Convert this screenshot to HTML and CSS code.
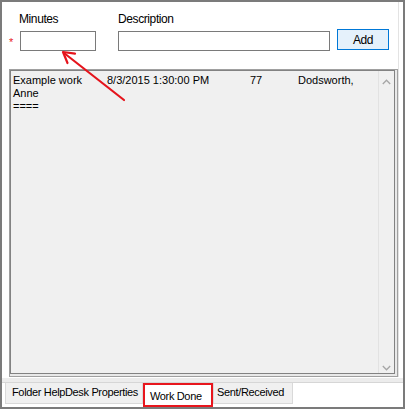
FILE: index.html
```html
<!DOCTYPE html>
<html>
<head>
<meta charset="utf-8">
<link rel="stylesheet" href="styles.css">
</head>
<body>
<div class="frame">
  <div class="page">
    <div class="form">
      <label class="lbl lbl-min">Minutes</label>
      <label class="lbl lbl-desc">Description</label>
      <span class="req">*</span>
      <div class="box box-min"></div>
      <div class="box box-desc"></div>
      <div class="btn">Add</div>
    </div>
    <div class="list">
      <div class="list-inner">
        <div class="rows">
          <div class="cell">Example work<br>Anne<br>====</div>
          <div class="cell">8/3/2015 1:30:00 PM</div>
          <div class="cell">77</div>
          <div class="cell">Dodsworth,</div>
        </div>
        <div class="scroll">
          <svg class="chev" width="9" height="6" viewBox="0 0 9 6"><polyline points="0.8,5 4.5,1.2 8.2,5" fill="none" stroke="#a6a6a6" stroke-width="1.3"/></svg>
          <svg class="chev" width="9" height="6" viewBox="0 0 9 6"><polyline points="0.8,1 4.5,4.8 8.2,1" fill="none" stroke="#a6a6a6" stroke-width="1.3"/></svg>
        </div>
      </div>
    </div>
  </div>
  <div class="band"></div>
  <div class="tabs">
    <div class="tab tab-props">Folder HelpDesk Properties</div>
    <div class="tab tab-work">Work Done</div>
    <div class="tab tab-sent">Sent/Received</div>
  </div>
  <svg class="arrow" width="405" height="409" viewBox="0 0 405 409">
    <g fill="none" stroke="#e5141c" stroke-width="2.2" stroke-linecap="round" stroke-linejoin="round">
      <line x1="122" y1="98" x2="62" y2="51"/>
      <polyline points="73,51.7 61,50 65.5,61"/>
    </g>
  </svg>
</div>
</body>
</html>
```

FILE: styles.css
```css
html, body {
  margin: 0;
  padding: 0;
  background: #ffffff;
}

.frame {
  position: relative;
  width: 405px;
  height: 409px;
  box-sizing: border-box;
  border: 2px solid #7b7b7b;
  background: #ffffff;
  display: flex;
  flex-direction: column;
  font-family: "Liberation Sans", Arial, sans-serif;
  color: #000;
}

.page {
  height: 376px;
  margin-right: 4px;
  box-sizing: border-box;
  border-right: 1px solid #e3e3e3;
  padding: 10px 0 0 7px;
  display: flex;
  flex-direction: column;
}

.form {
  display: grid;
  grid-template-columns: 11px 76px 22px 212px 7px 52px;
  grid-template-rows: 14px 21px;
  row-gap: 3px;
}

.lbl {
  font-size: 12px;
  line-height: 14px;
  letter-spacing: -0.4px;
  white-space: nowrap;
  grid-row: 1;
}

.lbl-min {
  grid-column: 2;
  margin-left: -1px;
}

.lbl-desc {
  grid-column: 4;
}

.req {
  grid-row: 2;
  grid-column: 1;
  color: #e8161d;
  font-size: 11px;
  line-height: 11px;
  margin-top: 8px;
}

.box {
  grid-row: 2;
  height: 20px;
  margin-top: 2px;
  box-sizing: border-box;
  border: 1px solid #7a7a7a;
  background: #fff;
}

.box-min {
  grid-column: 2;
}

.box-desc {
  grid-column: 4;
}

.btn {
  grid-row: 2;
  grid-column: 6;
  height: 21px;
  box-sizing: border-box;
  border: 1px solid #0078d7;
  background: #e5f1fb;
  font-size: 12px;
  letter-spacing: -0.4px;
  display: flex;
  align-items: center;
  justify-content: center;
}

.list {
  margin-top: 19px;
  height: 308px;
  box-sizing: border-box;
  border: 1px solid #a0a0a0;
  padding: 0 2px 2px 0;
  background: #e9e9e9;
  display: flex;
}

.list-inner {
  flex: 1;
  display: flex;
  border: 1px solid #828282;
  background: #f0f0f0;
}

.rows {
  flex: 1;
  display: grid;
  grid-template-columns: 94px 143px 48px auto;
  align-content: start;
  padding: 3px 0 0 2px;
  font-size: 11px;
  line-height: 13px;
  white-space: nowrap;
}

.scroll {
  width: 16px;
  box-sizing: border-box;
  border-left: 1px solid #e2e2e2;
  background: #f0f0f0;
  display: flex;
  flex-direction: column;
  align-items: center;
  justify-content: space-between;
  padding: 8px 0 2px 0;
}

.chev {
  display: block;
}

.band {
  height: 4px;
  background: #ececec;
  border-bottom: 1px solid #d6d6d6;
  margin-top: 1px;
}

.tabs {
  flex: 1;
  display: flex;
  align-items: flex-start;
  padding-left: 3px;
}

.tab {
  height: 21px;
  box-sizing: border-box;
  font-size: 11px;
  line-height: 13px;
  letter-spacing: -0.35px;
  white-space: nowrap;
  background: #f0f0f0;
  border: 1px solid #d9d9d9;
  border-top: none;
  padding-top: 3px;
}

.tab-props {
  width: 138px;
  padding-left: 6px;
}

.tab-work {
  width: 70px;
  height: 24px;
  background: #ffffff;
  border: 2px solid #e8161d;
  padding: 5px 0 0 5px;
}

.tab-sent {
  width: 80px;
  padding-left: 3px;
}

.arrow {
  position: absolute;
  left: 0;
  top: 0;
  pointer-events: none;
}
```
